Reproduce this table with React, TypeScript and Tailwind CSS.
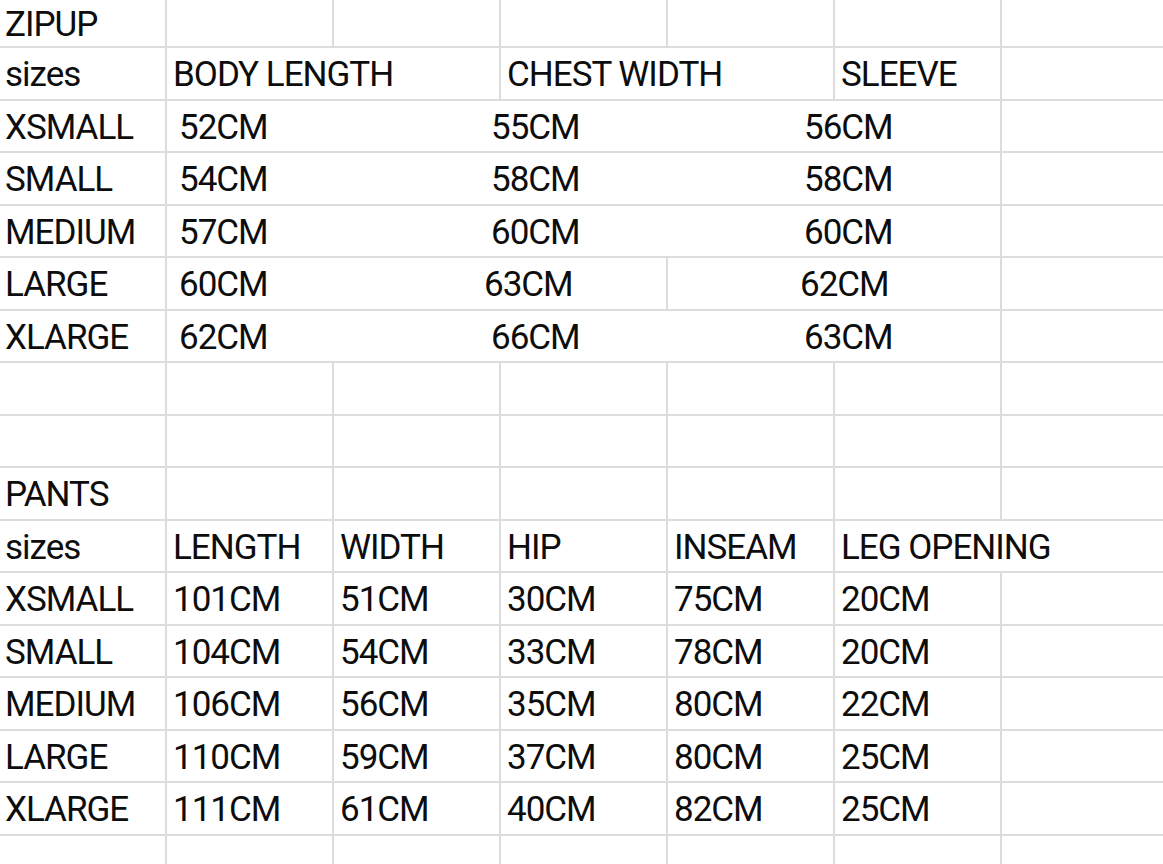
import React from "react";

const line = "border-[#dcdcdc]";
const font = { fontFamily: "Roboto, 'Noto Sans', sans-serif" };

function Cell({ children, w = "w-[167px]", last = false, pl = "pl-[6px]" }: { children?: React.ReactNode; w?: string; last?: boolean; pl?: string }) {
  return (
    <div className={`${w} ${last ? "flex-1" : `shrink-0 border-r-2 ${line}`} h-full flex items-center pt-[4px] ${pl} whitespace-nowrap overflow-visible`}>
      {children}
    </div>
  );
}

function Row({ children, h = "h-[52.5px]" }: { children: React.ReactNode; h?: string }) {
  return <div className={`flex ${h} border-b-2 ${line} shrink-0`}>{children}</div>;
}

function EmptyRow({ label, h }: { label?: string; h?: string }) {
  return (
    <Row h={h}>
      <Cell pl="pl-[5px]">{label}</Cell>
      <Cell />
      <Cell />
      <Cell />
      <Cell />
      <Cell />
      <Cell last />
    </Row>
  );
}

const zip = [
  ["XSMALL", "52CM", "55CM", "56CM"],
  ["SMALL", "54CM", "58CM", "58CM"],
  ["MEDIUM", "57CM", "60CM", "60CM"],
  ["LARGE", "60CM", "63CM", "62CM"],
  ["XLARGE", "62CM", "66CM", "63CM"],
];

const pants = [
  ["XSMALL", "101CM", "51CM", "30CM", "75CM", "20CM"],
  ["SMALL", "104CM", "54CM", "33CM", "78CM", "20CM"],
  ["MEDIUM", "106CM", "56CM", "35CM", "80CM", "22CM"],
  ["LARGE", "110CM", "59CM", "37CM", "80CM", "25CM"],
  ["XLARGE", "111CM", "61CM", "40CM", "82CM", "25CM"],
];

export default function App() {
  return (
    <div
      className="w-[1163px] h-[864px] overflow-hidden bg-white text-[35px] tracking-[-1px] text-[#0d0d0d] flex flex-col"
      style={font}
    >
      <EmptyRow label="ZIPUP" h="h-[48px]" />
      <Row>
        <Cell pl="pl-[5px]">sizes</Cell>
        <Cell w="w-[334px]">BODY LENGTH</Cell>
        <Cell w="w-[334px]">CHEST WIDTH</Cell>
        <Cell>SLEEVE</Cell>
        <Cell last />
      </Row>
      {zip.map((r) =>
        r[0] === "LARGE" ? (
          <Row key={r[0]}>
            <Cell pl="pl-[5px]">{r[0]}</Cell>
            <Cell w="w-[501px]" pl="pl-[12px]">
              <span className="w-[305px] shrink-0">{r[1]}</span>
              <span>{r[2]}</span>
            </Cell>
            <Cell w="w-[334px]" pl="pl-[132px]">{r[3]}</Cell>
            <Cell last />
          </Row>
        ) : (
          <Row key={r[0]}>
            <Cell pl="pl-[5px]">{r[0]}</Cell>
            <Cell w="w-[835px]" pl="pl-[12px]">
              <span className="w-[312px] shrink-0">{r[1]}</span>
              <span className="w-[313px] shrink-0">{r[2]}</span>
              <span>{r[3]}</span>
            </Cell>
            <Cell last />
          </Row>
        )
      )}
      <EmptyRow />
      <EmptyRow />
      <EmptyRow label="PANTS" />
      <Row>
        <Cell pl="pl-[5px]">sizes</Cell>
        <Cell>LENGTH</Cell>
        <Cell>WIDTH</Cell>
        <Cell>HIP</Cell>
        <Cell>INSEAM</Cell>
        <Cell w="w-[330px]" last>LEG OPENING</Cell>
      </Row>
      {pants.map((r) => (
        <Row key={r[0]}>
          <Cell pl="pl-[5px]">{r[0]}</Cell>
          <Cell>{r[1]}</Cell>
          <Cell>{r[2]}</Cell>
          <Cell>{r[3]}</Cell>
          <Cell>{r[4]}</Cell>
          <Cell>{r[5]}</Cell>
          <Cell last />
        </Row>
      ))}
      <EmptyRow />
    </div>
  );
}
